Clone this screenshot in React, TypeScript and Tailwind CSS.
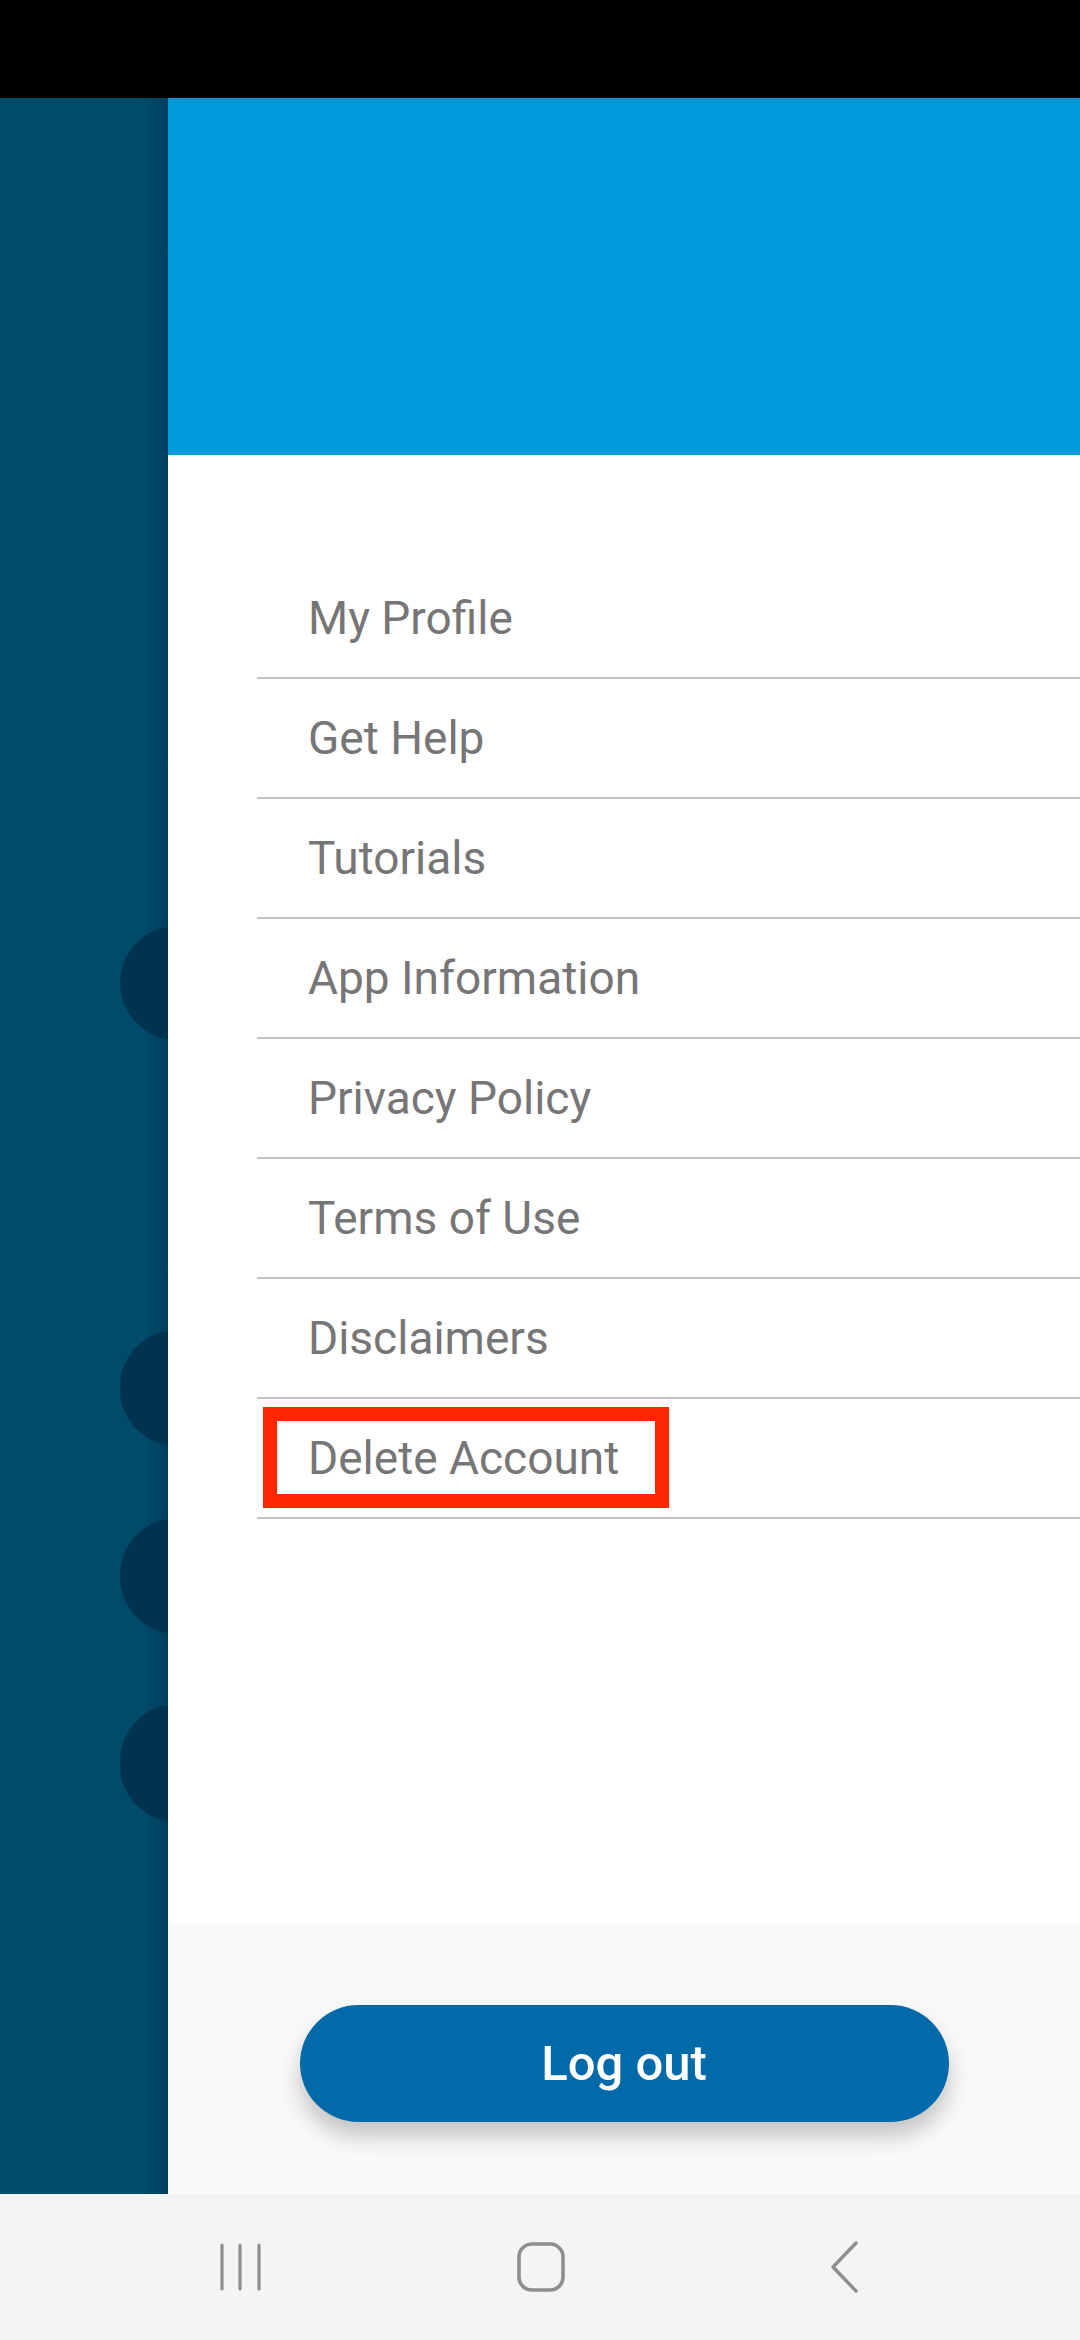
import React from "react";

const items = [
  "My Profile",
  "Get Help",
  "Tutorials",
  "App Information",
  "Privacy Policy",
  "Terms of Use",
  "Disclaimers",
  "Delete Account",
];

function NavBar() {
  return (
    <div className="h-[146px] bg-[#f4f4f4] flex items-center pl-[91px]">
      <div className="w-[300px] flex justify-center">
        <svg width="44" height="50" viewBox="0 0 44 50">
          <g stroke="#8e8e8e" strokeWidth="3.2" strokeLinecap="round">
            <line x1="3" y1="3" x2="3" y2="47" />
            <line x1="21" y1="3" x2="21" y2="47" />
            <line x1="40" y1="3" x2="40" y2="47" />
          </g>
        </svg>
      </div>
      <div className="w-[300px] flex justify-center">
        <svg width="48" height="50" viewBox="0 0 48 50">
          <rect x="2" y="2" width="44" height="46" rx="13" fill="none" stroke="#8e8e8e" strokeWidth="3.6" />
        </svg>
      </div>
      <div className="w-[300px] flex justify-center pl-[8px]">
        <svg width="30" height="52" viewBox="0 0 30 52">
          <polyline points="26,2 3,26 26,50" fill="none" stroke="#8e8e8e" strokeWidth="3.4" strokeLinecap="round" strokeLinejoin="round" />
        </svg>
      </div>
    </div>
  );
}

export default function App() {
  return (
    <div className="w-[1080px] h-[2340px] flex flex-col overflow-hidden font-['Roboto',sans-serif]">
      <div className="h-[98px] bg-black" />
      <div className="flex h-[2096px]">
        {/* dimmed page behind the drawer */}
        <div className="relative w-[168px] bg-[#004a6a] overflow-hidden">
          <div className="absolute right-0 top-0 h-full w-[24px] bg-gradient-to-r from-[#004a6a] to-[#003f5e]" />
          <div className="absolute left-[120px] top-[828px] w-[114px] h-[114px] rounded-full bg-[#00334f]" />
          <div className="absolute left-[120px] top-[1232px] w-[114px] h-[116px] rounded-full bg-[#00334f]" />
          <div className="absolute left-[120px] top-[1420px] w-[114px] h-[116px] rounded-full bg-[#00334f]" />
          <div className="absolute left-[120px] top-[1606px] w-[114px] h-[118px] rounded-full bg-[#00334f]" />
        </div>
        <div className="flex-1 flex flex-col bg-white">
          <div className="h-[357px] bg-[#009ad8] border-t-2 border-[#1a8fcf]" />
          <div className="flex-1 pt-[104px] pl-[89px]">
            {items.map((label) => (
              <div
                key={label}
                className="relative h-[120px] border-b-2 border-[#c2c2c2] flex items-center pl-[51px] text-[46px] text-[#767676]"
              >
                {label === "Delete Account" && (
                  <div className="absolute left-[6px] top-[8px] w-[406px] h-[101px] border-[14px] border-[#ff2600]" />
                )}
                <span className="relative">{label}</span>
              </div>
            ))}
          </div>
          <div className="h-[271px] bg-[#f9f9f9] flex justify-center pt-[82px]">
            <button className="w-[649px] h-[117px] rounded-full bg-[#036aaa] text-white text-[49px] font-medium shadow-[0_14px_22px_rgba(0,0,0,0.22)]">
              Log out
            </button>
          </div>
        </div>
      </div>
      <NavBar />
    </div>
  );
}
